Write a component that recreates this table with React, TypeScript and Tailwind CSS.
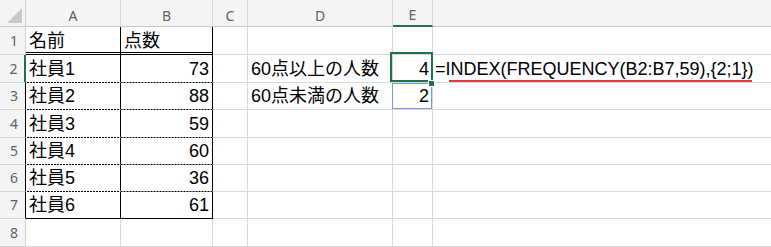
import React from "react";

const LETTERS = ["A", "B", "C", "D", "E", ""];

type Val = { t: string; right?: boolean };

const FORMULA = "=INDEX(FREQUENCY(B2:B7,59),{2;1})";

// Sheet contents, rows 1..8, columns A..F
const SHEET: (Val | null)[][] = [
  [{ t: "名前" }, { t: "点数" }, null, null, null, null],
  [{ t: "社員1" }, { t: "73", right: true }, null, { t: "60点以上の人数" }, { t: "4", right: true }, { t: FORMULA }],
  [{ t: "社員2" }, { t: "88", right: true }, null, { t: "60点未満の人数" }, { t: "2", right: true }, null],
  [{ t: "社員3" }, { t: "59", right: true }, null, null, null, null],
  [{ t: "社員4" }, { t: "60", right: true }, null, null, null, null],
  [{ t: "社員5" }, { t: "36", right: true }, null, null, null, null],
  [{ t: "社員6" }, { t: "61", right: true }, null, null, null, null],
  [null, null, null, null, null, null],
];

const GRID = "border-r-[#dadada] border-b-[#dadada]";
const HEAD = "bg-[#f4f4f4] text-[#616161] font-['Noto_Sans',sans-serif] text-[14px]";
const DOTTED =
  "border-b-transparent bg-origin-border bg-bottom bg-repeat-x bg-[length:3px_1px] bg-[linear-gradient(to_right,#000_2px,transparent_2px)]";

function ColumnHeader({ c }: { c: number }) {
  if (c === 0) {
    return (
      <div className={`relative border-r border-b border-r-[#d0d0d0] border-b-[#c8c8c8] ${HEAD}`}>
        <svg className="absolute left-0 top-0" width="25" height="26" viewBox="0 0 25 26">
          <polygon points="7,23 22,8 22,23" fill="#c9c9c9" />
        </svg>
      </div>
    );
  }
  const selected = c === 5;
  const last = c === 6;
  return (
    <div
      className={`flex items-end justify-center pb-[3px] leading-[14px] ${HEAD} ${
        last ? "" : "border-r border-r-[#d6d6d6]"
      } ${
        selected
          ? "bg-[#d2ecdd] text-[#1d6b40] border-b-2 border-b-[#217346]"
          : "border-b border-b-[#c8c8c8]"
      }`}
    >
      <span>{LETTERS[c - 1]}</span>
    </div>
  );
}

function RowHeader({ r }: { r: number }) {
  const selected = r === 2;
  const tableEdge = r >= 3 && r <= 7;
  return (
    <div
      className={`flex items-end justify-center pl-[3px] pb-[6px] leading-[14px] border-b border-b-[#d4d4d4] ${HEAD} ${
        selected
          ? "bg-[#d2ecdd] text-[#1d6b40] border-r-2 border-r-[#217346]"
          : tableEdge
          ? "border-r border-r-black"
          : "border-r border-r-[#cfcfcf]"
      }`}
    >
      <span>{r}</span>
    </div>
  );
}

function Cell({ r, c }: { r: number; c: number }) {
  const v = SHEET[r - 1][c - 1];
  const inTable = (c === 1 || c === 2) && r <= 7;
  let border = "";
  if (inTable) {
    if (r === 1) border = "border-r border-r-black border-b-[3px] border-double border-b-black";
    else if (r === 7) border = "border-r border-r-black border-b border-b-black";
    else border = `border-r border-r-black border-b ${DOTTED}`;
  } else if (c === 6) {
    border = `border-b ${GRID}`;
  } else {
    border = `border-r border-b ${GRID}`;
  }
  const pb = r === 1 ? "pb-[2px]" : "pb-[4px]";
  return (
    <div
      className={`relative flex items-end ${pb} ${
        v?.right ? "justify-end pr-[3px]" : c === 6 ? "pl-[2px]" : "pl-[3px]"
      } ${border} bg-white`}
    >
      {v && <span className="whitespace-nowrap text-[18px] leading-[18px] text-black">{v.t}</span>}
      {r === 2 && c === 5 && (
        <>
          <div className="absolute -left-[3px] -right-[1px] -top-[3px] bottom-0 z-10 border-2 border-[#217346]" />
          <div className="absolute left-[35px] top-[25px] z-20 h-[7px] w-[7px] border border-white bg-[#217346]" />
        </>
      )}
      {r === 3 && c === 5 && (
        <div className="absolute -left-px right-0 top-0 bottom-0 z-0 border border-[#7598e2]" />
      )}
      {r === 2 && c === 6 && (
        <div className="absolute left-[16px] top-[25px] h-[2px] w-[303px] bg-[#e0393e]" />
      )}
    </div>
  );
}

export default function App() {
  const cols = [0, 1, 2, 3, 4, 5, 6];
  return (
    <div className="h-[247px] w-[771px] overflow-hidden bg-white font-['Liberation_Sans','Noto_Sans_CJK_JP',sans-serif]">
      <div className="grid h-full grid-cols-[26px_95px_92px_35px_145px_40px_1fr] grid-rows-[27px_28px_28px_27px_28px_27px_27px_27px_28px]">
        {cols.map((c) => (
          <ColumnHeader key={`h${c}`} c={c} />
        ))}
        {[1, 2, 3, 4, 5, 6, 7, 8].map((r) => (
          <React.Fragment key={`r${r}`}>
            <RowHeader r={r} />
            {[1, 2, 3, 4, 5, 6].map((c) => (
              <Cell key={`c${r}-${c}`} r={r} c={c} />
            ))}
          </React.Fragment>
        ))}
      </div>
    </div>
  );
}
